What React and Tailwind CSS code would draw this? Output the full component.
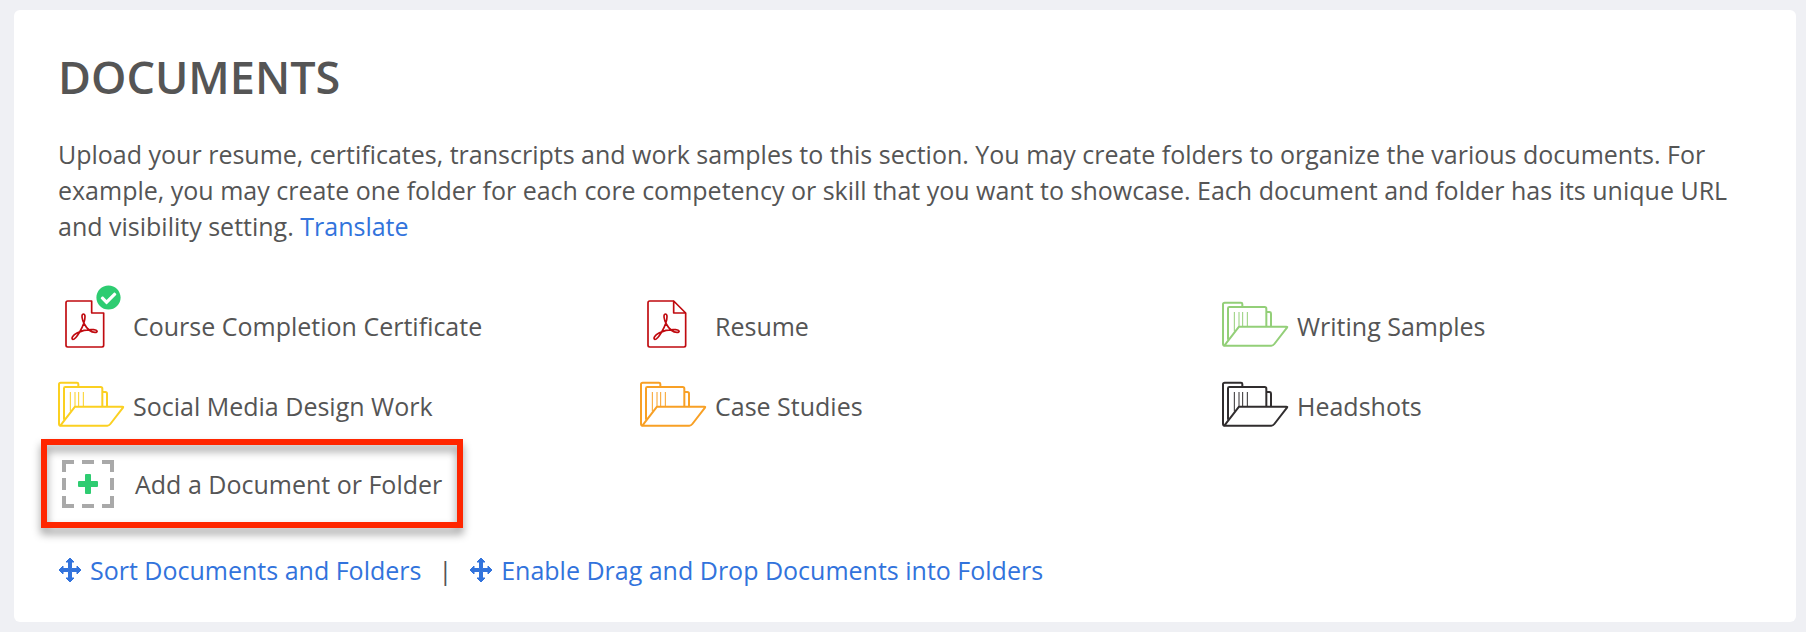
import React from "react";
import { FaCheckCircle } from "react-icons/fa";

const items = [
  { title: "Course Completion Certificate", type: "pdf", verified: true },
  { title: "Resume", type: "pdf" },
  { title: "Writing Samples", type: "folder", color: "text-[#93cf78]" },
  { title: "Social Media Design Work", type: "folder", color: "text-[#fbd021]" },
  { title: "Case Studies", type: "folder", color: "text-[#f8a025]" },
  { title: "Headshots", type: "folder", color: "text-[#302d2e]" },
];

function FolderIcon({ className }) {
  return (
    <svg
      viewBox="0 0 201 138"
      className={`w-[67px] h-[46px] ${className}`}
      fill="none"
      stroke="currentColor"
      strokeWidth="6"
      strokeLinejoin="round"
      aria-hidden="true"
    >
      <path d="M61 17V9q0-4-4-4H8q-5 0-5 5v120q0 4 4 4" />
      <path d="M18 116V22q0-4 4-4h106q5 0 5 5v54" />
      <path d="M135 33h7q5 0 5 5v39" />
      <path d="M37 33v58M51 33v42M62 33v42M76 33v42" strokeWidth="3" />
      <path d="M51 77h142q4 0 2 3l-38 49q-4 5-9 5H7Z" />
    </svg>
  );
}

function PdfIcon({ verified }) {
  return (
    <svg
      viewBox="0 0 120 144"
      className="w-[40px] h-[48px] text-[#c00a0f]"
      fill="none"
      stroke="currentColor"
      strokeWidth="5"
      strokeLinejoin="round"
      aria-hidden="true"
    >
      <path
        d={
          verified
            ? "M80 3H8Q3 3 3 8v128q0 5 5 5h103q5 0 5-5V39H80Z"
            : "M80 3H8Q3 3 3 8v128q0 5 5 5h103q5 0 5-5V39L80 3v36h36"
        }
      />
      <path d="M55 42C48 42 51 60 58 72C64 83 76 97 90 97C100 97 98 90 86 89C70 88 50 92 36 99C24 105 18 114 23 118C29 121 38 106 44 96C52 82 60 62 60 50C60 44 58 42 55 42Z" />
    </svg>
  );
}

function MoveIcon() {
  return (
    <svg viewBox="0 0 48 52" className="h-[26px] w-6" fill="currentColor" aria-hidden="true">
      <path
        d="M24 2 32 10H27V23H38V18L46 26 38 34V29H27V42H32L24 50 16 42H21V29H10V34L2 26 10 18V23H21V10H16Z"
        stroke="currentColor"
        strokeWidth="2"
        strokeLinejoin="round"
      />
    </svg>
  );
}

function DocumentItem({ item }) {
  return (
    <li>
      <a href="#" className="flex h-20 items-center">
        <span className="relative flex w-[75px] flex-none">
          {item.type === "pdf" ? (
            <span className="pl-[7px]">
              <PdfIcon verified={item.verified} />
            </span>
          ) : (
            <FolderIcon className={item.color} />
          )}
          {item.verified && (
            <FaCheckCircle className="absolute -top-[15px] left-[38px] size-[25px] text-[#2ecc71]" />
          )}
        </span>
        <span className="pt-1">{item.title}</span>
      </a>
    </li>
  );
}

function AddButton() {
  return (
    <button type="button" className="relative flex h-[79px] items-center pr-5">
      <span className="flex w-[77px] flex-none pl-1">
        <span className="relative flex h-12 w-[52px] items-center justify-center">
          <svg
            viewBox="0 0 52 48"
            className="absolute inset-0 text-[#a9a9a9]"
            fill="none"
            stroke="currentColor"
            strokeWidth="4"
            aria-hidden="true"
          >
            <path d="M12 2H2v10M20 2h12M40 2h10v10M2 18v12M50 18v12M2 36v10h10M20 46h12M40 46h10V36" />
          </svg>
          <svg
            viewBox="0 0 20 20"
            className="size-5 text-[#2ecc71]"
            fill="currentColor"
            aria-hidden="true"
          >
            <rect x="7" width="6" height="20" rx="1" />
            <rect y="7" width="20" height="6" rx="1" />
          </svg>
        </span>
      </span>
      Add a Document or Folder
      <span className="absolute -top-[5px] -right-px -bottom-[5px] -left-[17px] border-6 border-[#ff2600] drop-shadow-[0_6px_4px_rgba(0,0,0,0.4)]" />
    </button>
  );
}

export default function App() {
  return (
    <div className="min-h-screen bg-[#eff0f4] pt-2.5 pr-2.5 pb-2.5 pl-3.5 font-['Open_Sans',sans-serif] text-[25px] leading-9 text-[#555]">
      <section className="rounded-md bg-white px-11 pt-[39px] pb-[34px]">
        <h1 className="text-[45px] leading-[56px] font-semibold">DOCUMENTS</h1>
        <p className="mt-[31px]">
          Upload your resume, certificates, transcripts and work samples to this section. You may
          create folders to organize the various documents. For example, you may create one folder
          for each core competency or skill that you want to showcase. Each document and folder has
          its unique URL and visibility setting.{" "}
          <a href="#" className="text-[#3273dc]">
            Translate
          </a>
        </p>
        <ul className="mt-10 grid grid-cols-3 gap-x-[52px]">
          {items.map((item) => (
            <DocumentItem key={item.title} item={item} />
          ))}
        </ul>
        <AddButton />
        <div className="mt-[29px] flex items-center">
          <a href="#" className="flex items-center gap-2 text-[#3273dc]">
            <MoveIcon />
            Sort Documents and Folders
          </a>
          <span className="px-[17px]">|</span>
          <a href="#" className="flex items-center gap-2 text-[#3273dc]">
            <MoveIcon />
            Enable Drag and Drop Documents into Folders
          </a>
        </div>
      </section>
    </div>
  );
}
